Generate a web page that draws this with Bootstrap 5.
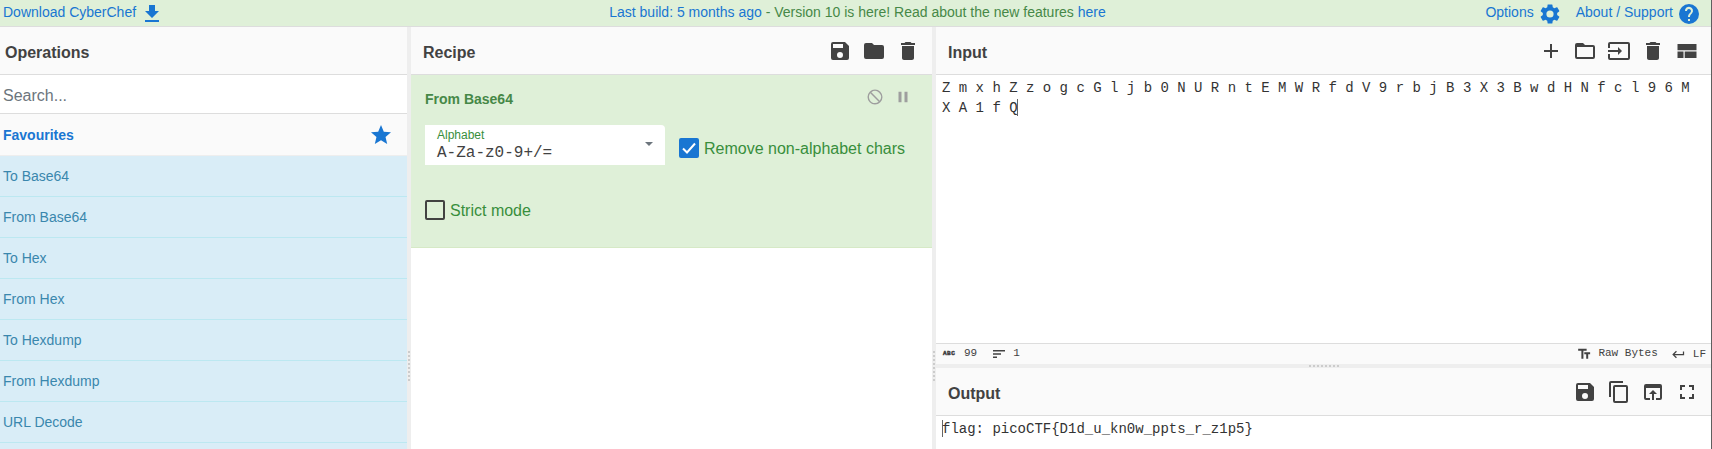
<!DOCTYPE html>
<html lang="en">
<head>
<meta charset="utf-8">
<title>CyberChef</title>
<link rel="stylesheet" href="https://cdn.jsdelivr.net/npm/bootstrap@5.3.0/dist/css/bootstrap.min.css">
<style>
html,body{height:100%}
body{font-family:"Liberation Sans",Arial,sans-serif;font-size:14px;line-height:20px;color:#424242;background:#fff}
.app{height:100vh;border-right:1px solid #5f5f5f}
.banner{height:27px;background:#dff0d8;border-bottom:1px solid #ddd;color:#468847;padding:0 11px 3px 3px}
.banner > *{flex:1 1 0}
.banner a{color:#1976d2;text-decoration:none}
.banner .news{padding-left:4px;transform:translateX(4px)}
.banner svg{margin:4px 0 0 4px}
.banner .gear{margin-right:14px}
.banner .help{margin-right:-1px}
svg{fill:currentColor;display:block;flex:none}
.blue{color:#1976d2}
.ops{width:407px}
.recipe-pane{width:521px}
.splitter{width:4px;background:#eee}
.splitter-h{height:4px;background:#eee}
.dots{width:2px;height:30px;background:repeating-linear-gradient(#ccc 0 2px,transparent 2px 4px);transform:translateY(128px)}
.dots-h{height:2px;width:30px;background:repeating-linear-gradient(90deg,#ccc 0 2px,transparent 2px 4px)}
.title-bar{height:48px;background:#fafafa;border-bottom:1px solid #ddd;padding:0 12px}
.title-bar h2{font-size:16px;font-weight:700;line-height:24px;margin:5px 0 0}
.title-bar .tools{gap:10px;margin-bottom:-1px}
.search{height:39px;border:0;border-bottom:1px solid #ddd;font-size:16px;padding:4px 3px 0;border-radius:0;color:#6c757d;outline:0}
.search::placeholder{color:#6c757d;opacity:1}
.fav{height:42px;background:#fafafa;border-bottom:1px solid #eee;color:#1976d2;font-weight:700;padding:0 14px 0 3px}
.op{height:41px;line-height:40px;background:#d9edf7;border-bottom:1px solid #bce8f1;color:#3a87ad;padding-left:3px}
.card-op{height:173px;background:#dff0d8;border-bottom:1px solid #d6e9c6;padding:13px 20px 0 14px}
.op-name{color:#468847;font-weight:700;height:20px;line-height:22px}
.op-icons{gap:10px;color:#9e9e9e}
.alpha{width:240px;height:40px;background:#fff;border-radius:0 4px 0 0;padding:0 12px 4px;margin-top:17px}
.alpha small{font-size:12px;line-height:20px;color:#388e3c;display:block}
.alpha span{font-family:"Liberation Mono",monospace;font-size:16px;line-height:16px;display:block}
.caret{width:0;height:0;border:4.5px solid transparent;border-top-color:#6c757d;border-bottom:0;margin:2px 0 0}
.chk{font-size:16px;color:#388e3c;gap:5px}
.chk span{padding-top:2px}
.box{width:20px;height:20px;border:2px solid #424242;border-radius:2px}
.box.on{background:#1976d2;border-color:#1976d2;color:#fff}
.code{font-family:"Liberation Mono",monospace;font-size:14px;line-height:20px;color:#333;padding:3px 6px 1px;white-space:pre}
.cur{display:inline-block;width:1px;height:17px;background:#666;vertical-align:-4px;margin:0 -1px 0 0}
.cur-end{margin-left:-1px}
.status{height:21px;background:#fafafa;border-top:1px solid #ddd;font-family:"Liberation Mono",monospace;font-size:11px;line-height:18px;padding:0 5px 2px 7px}
.abc{font-size:6px;font-weight:700;line-height:6px;width:12px;letter-spacing:.5px;margin:2px 9px 0 0;-webkit-text-stroke:.5px #424242}
</style>
</head>
<body>
<svg class="d-none">
<symbol id="save" viewBox="0 0 24 24"><path d="M17 3H5a2 2 0 0 0-2 2v14a2 2 0 0 0 2 2h14a2 2 0 0 0 2-2V7l-4-4zm-5 16a3 3 0 1 1 0-6 3 3 0 0 1 0 6zm3-10H5V5h10v4z"/></symbol>
<symbol id="trash" viewBox="0 0 24 24"><path d="M6 19c0 1.100.9 2 2 2h8c1.100 0 2-.9 2-2V7H6v12zM19 4h-3.500l-1-1h-5l-1 1H5v2h14V4z"/></symbol>
</svg>
<div class="app d-flex flex-column overflow-hidden">
  <header class="banner d-flex align-items-center flex-shrink-0">
    <a href="#" class="d-flex align-items-center">Download CyberChef<svg width="24" height="24" viewBox="0 0 24 24"><path d="M19 9h-4V3H9v6H5l7 7 7-7zM5 18v2h14v-2H5z"/></svg></a>
    <div class="news text-center text-nowrap"><a href="#">Last build: 5 months ago</a> - Version 10 is here! Read about the new features <a href="#">here</a></div>
    <div class="d-flex justify-content-end align-items-center"><a href="#">Options</a><svg class="blue gear" width="24" height="24" viewBox="0 0 24 24"><path d="M19.140 12.940c.04-.3.060-.61.060-.94 0-.32-.02-.64-.07-.94l2.030-1.580c.18-.14.23-.41.120-.61l-1.920-3.320c-.12-.22-.37-.29-.59-.22l-2.390.96c-.5-.38-1.030-.7-1.620-.94l-.36-2.540A.48.48 0 0 0 13.920 2.400h-3.840c-.24 0-.43.17-.47.41l-.36 2.540c-.59.24-1.130.57-1.620.94l-2.390-.96c-.22-.08-.47 0-.59.22L2.740 8.870c-.12.21-.08.47.12.61l2.030 1.580c-.05.3-.09.63-.09.94s.02.64.07.94l-2.030 1.580c-.18.14-.23.41-.12.61l1.920 3.320c.12.22.37.29.59.22l2.390-.96c.5.38 1.030.7 1.620.94l.36 2.540c.05.24.24.41.48.41h3.840c.24 0 .44-.17.47-.41l.36-2.540c.59-.24 1.130-.56 1.620-.94l2.390.96c.22.08.47 0 .59-.22l1.920-3.320c.12-.22.07-.47-.12-.61l-2.010-1.580zM12 15.600a3.600 3.600 0 1 1 0-7.200 3.600 3.600 0 0 1 0 7.200z"/></svg><a href="#">About / Support</a><svg class="blue help" width="24" height="24" viewBox="0 0 24 24"><path d="M12 2a10 10 0 1 0 0 20 10 10 0 0 0 0-20zm1 17h-2v-2h2v2zm2.070-7.750-.9.920C13.450 12.900 13 13.500 13 15h-2v-.5c0-1.100.45-2.100 1.170-2.830l1.240-1.260A2 2 0 1 0 10 9H8a4 4 0 1 1 7.070 2.250z"/></svg></div>
  </header>
  <main class="d-flex flex-grow-1" style="min-height:0">
    <section class="ops flex-shrink-0 overflow-hidden">
      <div class="title-bar d-flex align-items-center" style="padding-left:5px"><h2>Operations</h2></div>
      <input class="search w-100 d-block" placeholder="Search...">
      <div class="fav d-flex justify-content-between align-items-center">Favourites<svg width="24" height="24" viewBox="0 0 24 24"><path d="M12 17.270 18.180 21l-1.640-7.030L22 9.240l-7.190-.61L12 2 9.190 8.630 2 9.240l5.460 4.730L5.820 21z"/></svg></div>
      <div class="op">To Base64</div><div class="op">From Base64</div><div class="op">To Hex</div><div class="op">From Hex</div><div class="op">To Hexdump</div><div class="op">From Hexdump</div><div class="op">URL Decode</div><div class="op"></div>
    </section>
    <div class="splitter flex-shrink-0 d-flex align-items-center justify-content-center"><div class="dots"></div></div>
    <section class="recipe-pane flex-shrink-0">
      <div class="title-bar d-flex align-items-center justify-content-between"><h2>Recipe</h2>
        <div class="tools d-flex"><svg width="24" height="24"><use href="#save"/></svg><svg width="24" height="24" viewBox="0 0 24 24"><path d="M10 4H4a2 2 0 0 0-2 2v12a2 2 0 0 0 2 2h16a2 2 0 0 0 2-2V8a2 2 0 0 0-2-2h-8l-2-2z"/></svg><svg width="24" height="24"><use href="#trash"/></svg></div></div>
      <div class="card-op">
        <div class="d-flex justify-content-between"><div class="op-name">From Base64</div>
          <div class="op-icons d-flex"><svg width="18" height="18" viewBox="0 0 24 24"><path d="M12 2a10 10 0 1 0 0 20 10 10 0 0 0 0-20zm0 18a8 8 0 0 1-6.310-12.900L16.900 18.310A7.900 7.900 0 0 1 12 20zm6.310-3.100L7.100 5.690A8 8 0 0 1 18.310 16.900z"/></svg><svg width="18" height="18" viewBox="0 0 24 24"><path d="M6 19h4V5H6v14zm8-14v14h4V5h-4z"/></svg></div></div>
        <div class="d-flex">
          <div class="alpha d-flex justify-content-between align-items-center"><div><small>Alphabet</small><span>A-Za-z0-9+/=</span></div><i class="caret"></i></div>
          <div class="chk d-flex align-items-center" style="margin:23px 0 0 14px"><div class="box on"><svg width="16" height="16" viewBox="0 0 16 16"><path d="M2 8.500l4 4 8-9" fill="none" stroke="#fff" stroke-width="2"/></svg></div><span>Remove non-alphabet chars</span></div>
        </div>
        <div class="chk d-flex align-items-center" style="margin-top:34px"><div class="box"></div><span>Strict mode</span></div>
      </div>
    </section>
    <div class="splitter flex-shrink-0 d-flex align-items-center justify-content-center"><div class="dots"></div></div>
    <section class="flex-grow-1 d-flex flex-column" style="min-width:0">
      <div class="title-bar d-flex align-items-center justify-content-between flex-shrink-0"><h2>Input</h2>
        <div class="tools d-flex">
          <svg width="24" height="24" viewBox="0 0 24 24"><path d="M19 13h-6v6h-2v-6H5v-2h6V5h2v6h6v2z"/></svg>
          <svg width="24" height="24" viewBox="0 0 24 24"><path d="M20 6h-8l-2-2H4a2 2 0 0 0-2 2v12a2 2 0 0 0 2 2h16a2 2 0 0 0 2-2V8a2 2 0 0 0-2-2zm0 12H4V8h16v10z"/></svg>
          <svg width="24" height="24" viewBox="0 0 24 24"><path d="M21 3.010H3a2 2 0 0 0-2 2V9h2V4.990h18v14.030H3V15H1v4.010a2 2 0 0 0 2 1.980h18a2 2 0 0 0 2-1.980v-14a2 2 0 0 0-2-2zM11 16l4-4-4-4v3H1v2h10v3z"/></svg>
          <svg width="24" height="24"><use href="#trash"/></svg>
          <svg width="24" height="24" viewBox="0 0 24 24"><path d="M2.500 5h19v6.300h-19zM2.500 12.500h6v6.500h-6zM9.700 12.500h11.800v6.500H9.700z"/></svg>
        </div></div>
      <div class="code flex-grow-1">Z m x h Z z o g c G l j b 0 N U R n t E M W R f d V 9 r b j B 3 X 3 B w d H N f c l 9 6 M
X A 1 f Q<i class="cur cur-end"></i></div>
      <div class="status d-flex align-items-center flex-shrink-0">
        <span class="abc">ABC</span>99
        <svg style="margin:2px 8px 0 16px" width="12" height="10" viewBox="0 0 12 10"><path d="M0 1h12v1.500H0zM0 4.200h8v1.500H0zM0 7.500h4v1.500H0z"/></svg>1
        <svg class="ms-auto" style="margin:2px 7px 0 0" width="14" height="14" viewBox="0 0 24 24"><path d="M2 3v3.500h5.500V20h3.500V6.500h5.500V3zM22.500 9h-10v3.500h3.300V20h3.400v-7.500h3.300z"/></svg>Raw Bytes
        <svg style="margin:3px 7px 0 13px" width="15" height="15" viewBox="0 0 24 24"><path d="M19 7v4H5.830l3.580-3.590L8 6l-6 6 6 6 1.410-1.410L5.830 13H21V7z"/></svg><span style="padding-top:2px">LF</span>
      </div>
      <div class="splitter-h flex-shrink-0 d-flex align-items-center justify-content-center"><div class="dots-h"></div></div>
      <div class="title-bar d-flex align-items-center justify-content-between flex-shrink-0"><h2>Output</h2>
        <div class="tools d-flex">
          <svg width="24" height="24"><use href="#save"/></svg>
          <svg width="24" height="24" viewBox="0 0 24 24"><path d="M16 1H4a2 2 0 0 0-2 2v14h2V3h12V1zm3 4H8a2 2 0 0 0-2 2v14a2 2 0 0 0 2 2h11a2 2 0 0 0 2-2V7a2 2 0 0 0-2-2zm0 16H8V7h11v14z"/></svg>
          <svg width="24" height="24" viewBox="0 0 24 24"><path d="M19 4H5a2 2 0 0 0-2 2v12a2 2 0 0 0 2 2h4v-2H5V8h14v10h-4v2h4a2 2 0 0 0 2-2V6a2 2 0 0 0-2-2zm-7 6-4 4h3v6h2v-6h3l-4-4z"/></svg>
          <svg width="24" height="24" viewBox="0 0 24 24"><path d="M7 14H5v5h5v-2H7v-3zm-2-4h2V7h3V5H5v5zm12 7h-3v2h5v-5h-2v3zM14 5v2h3v3h2V5h-5z"/></svg>
        </div></div>
      <div class="code flex-shrink-0" style="height:33px"><i class="cur"></i>flag: picoCTF{D1d_u_kn0w_ppts_r_z1p5}</div>
    </section>
  </main>
</div>
<script src="https://cdn.jsdelivr.net/npm/bootstrap@5.3.0/dist/js/bootstrap.bundle.min.js"></script>
</body>
</html>
